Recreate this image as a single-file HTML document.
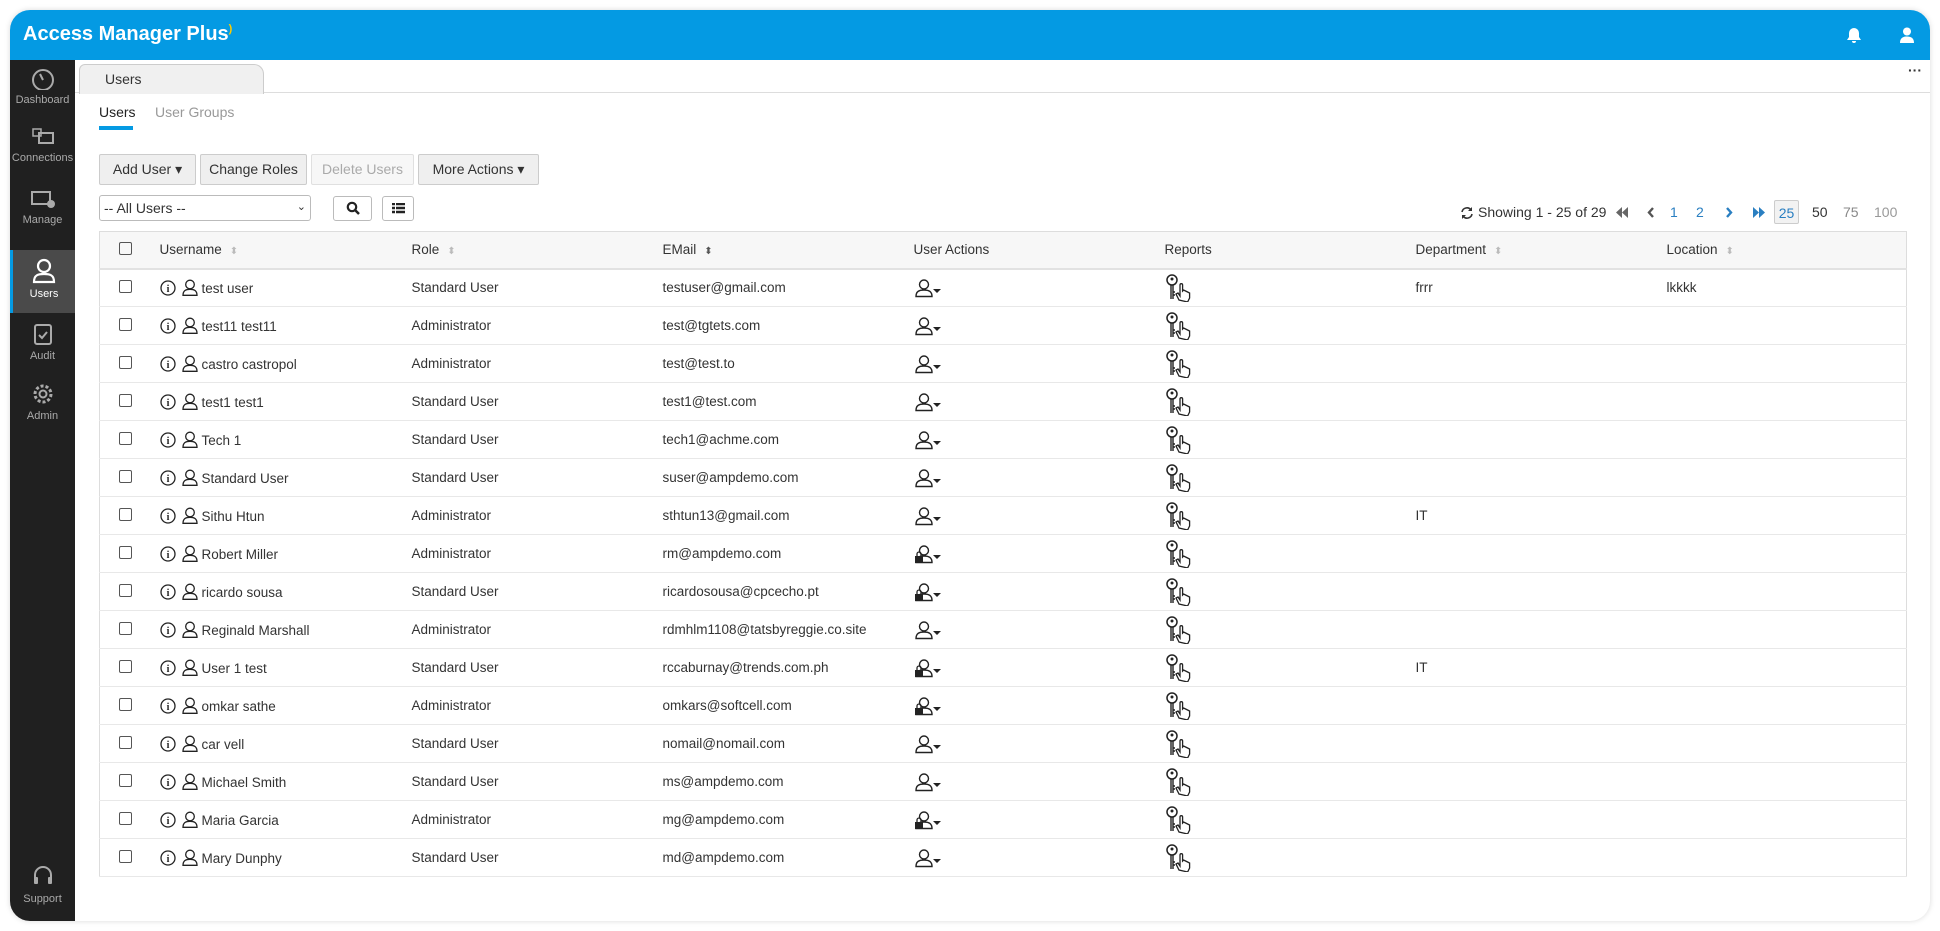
<!DOCTYPE html><html><head><meta charset="utf-8"><style>
*{box-sizing:border-box;margin:0;padding:0}
body{width:1940px;height:931px;background:#fff;font-family:"Liberation Sans",sans-serif;color:#333;position:relative;overflow:hidden}
.frame{position:absolute;left:10px;top:10px;width:1920px;height:911px;border-radius:20px;overflow:hidden;box-shadow:0 0 6px rgba(0,0,0,.15);background:#fff}
.top{position:absolute;left:0;top:0;width:100%;height:50px;background:#049ae3;color:#fff}
.logo{position:absolute;left:13px;top:13px;font-size:20px;font-weight:bold;letter-spacing:0}
.side{position:absolute;left:0;top:50px;width:65px;bottom:0;background:#202020}
.si{position:absolute;left:0;width:65px;text-align:center;color:#aaa;font-size:11px}
.si svg{display:block;margin:0 auto 4px}
.si.act{background:#4a4a4a;color:#fff;border-left:3px solid #049ae3}
.tabbar{position:absolute;left:65px;top:50px;right:0;height:33px;border-bottom:1px solid #ddd}
.tab{position:absolute;left:4px;top:4px;width:185px;height:30px;background:#f0f0f0;border:1px solid #ccc;border-bottom:none;border-radius:6px 10px 0 0;font-size:14px;padding:6px 0 0 25px;color:#333}
.abs{position:absolute}
.btn{position:absolute;top:144px;height:31px;background:#efefef;border:1px solid #ccc;border-radius:2px;font-size:14px;text-align:center;line-height:29px;color:#333}
table{position:absolute;left:89px;top:221px;width:1808px;border-collapse:collapse;border:1px solid #ddd;font-size:13.5px}
th{background:#f7f7f7;height:37px;font-weight:normal;text-align:left;border-bottom:2px solid #e2e2e2;color:#333}
td{height:38px;border-bottom:1px solid #e8e8e8;vertical-align:middle}
.cb{display:inline-block;width:13px;height:13px;border:1px solid #555;border-radius:2px;margin-left:-2px;vertical-align:-1px}
.srt{color:#bbb;font-size:10px;margin-left:8px}
.pg{position:absolute;top:194px;font-size:14px;line-height:16px}
</style></head><body><div class="frame">
<div class="top"><div class="logo">Access Manager Plus<span style="color:#fc0;font-size:11px;vertical-align:top">)</span></div>
<svg class="abs" style="left:1837px;top:17px" width="14" height="17" viewBox="0 0 14 17"><path d="M7 1a5 5 0 0 0-5 5v4l-2 3h14l-2-3V6a5 5 0 0 0-5-5zM5 14h4a2 2 0 0 1-4 0z" fill="#fff"/></svg>
<svg class="abs" style="left:1889px;top:17px" width="16" height="16" viewBox="0 0 16 16"><circle cx="8" cy="4.5" r="4" fill="#fff"/><path d="M1 16c0-5 3-6.5 7-6.5s7 1.5 7 6.5z" fill="#fff"/></svg>
</div>
<div class="side">
<div class="si" style="top:8px"><svg width="24" height="22" viewBox="0 0 24 22"><circle cx="12" cy="12" r="10" fill="none" stroke="#aaa" stroke-width="2"/><path d="M12 12l-3-6" stroke="#aaa" stroke-width="2"/></svg>Dashboard</div>
<div class="si" style="top:68px"><svg width="24" height="20" viewBox="0 0 24 20"><rect x="8" y="5" width="14" height="10" fill="none" stroke="#aaa" stroke-width="2"/><rect x="2" y="1" width="8" height="7" fill="none" stroke="#aaa" stroke-width="1.5"/></svg>Connections</div>
<div class="si" style="top:130px"><svg width="26" height="20" viewBox="0 0 26 20"><rect x="2" y="2" width="18" height="12" fill="none" stroke="#aaa" stroke-width="2"/><circle cx="21" cy="14" r="4" fill="#aaa"/></svg>Manage</div>
<div class="si act" style="top:190px;height:63px;padding-top:8px"><svg width="24" height="26" viewBox="0 0 24 26"><circle cx="12" cy="8" r="6" fill="none" stroke="#fff" stroke-width="2.2"/><path d="M2 24c0-7 4-8 10-8s10 1 10 8z" fill="none" stroke="#fff" stroke-width="2.2"/></svg>Users</div>
<div class="si" style="top:262px"><svg width="22" height="24" viewBox="0 0 22 24"><rect x="3" y="3" width="16" height="19" rx="2" fill="none" stroke="#aaa" stroke-width="2"/><path d="M7 13l3 3 5-6" fill="none" stroke="#aaa" stroke-width="2"/></svg>Audit</div>
<div class="si" style="top:322px"><svg width="24" height="24" viewBox="0 0 24 24"><circle cx="12" cy="12" r="8" fill="none" stroke="#aaa" stroke-width="3" stroke-dasharray="3 2"/><circle cx="12" cy="12" r="3.5" fill="none" stroke="#aaa" stroke-width="2"/></svg>Admin</div>
<div class="si" style="top:805px"><svg width="22" height="24" viewBox="0 0 22 24"><path d="M3 14V10a8 8 0 0 1 16 0v4" fill="none" stroke="#aaa" stroke-width="2"/><rect x="2" y="12" width="4" height="7" rx="1" fill="#aaa"/><rect x="16" y="12" width="4" height="7" rx="1" fill="#aaa"/></svg>Support</div>
</div>
<div class="tabbar"><div class="tab">Users</div><div class="abs" style="right:8px;top:2px;font-weight:bold;font-size:14px">···</div></div>
<div class="abs" style="left:89px;top:94px;font-size:14px;color:#222">Users</div>
<div class="abs" style="left:89px;top:116px;width:34px;height:4px;background:#049ae3"></div>
<div class="abs" style="left:145px;top:94px;font-size:14px;color:#999">User Groups</div>
<div class="btn" style="left:89px;width:97px">Add User ▾</div>
<div class="btn" style="left:190px;width:107px">Change Roles</div>
<div class="btn" style="left:301px;width:103px;color:#aaa;background:#f7f7f7;border-color:#e0e0e0">Delete Users</div>
<div class="btn" style="left:408px;width:121px">More Actions ▾</div>
<div class="abs" style="left:89px;top:185px;width:212px;height:26px;border:1px solid #bbb;border-radius:3px;font-size:14px;padding:4px 4px;background:#fff">-- All Users --<span style="float:right;font-size:11px">⌄</span></div>
<div class="abs" style="left:323px;top:186px;width:39px;height:25px;border:1px solid #bbb;border-radius:3px;text-align:center;padding-top:4px"><svg width="14" height="14" viewBox="0 0 14 14"><circle cx="6" cy="6" r="4.2" fill="none" stroke="#222" stroke-width="2.2"/><path d="M9 9l4 4" stroke="#222" stroke-width="2.5"/></svg></div>
<div class="abs" style="left:372px;top:186px;width:32px;height:25px;border:1px solid #bbb;border-radius:3px;text-align:center;padding-top:5px"><svg width="13" height="12" viewBox="0 0 13 12"><path d="M0 1h3M4 1h9M0 5h3M4 5h9M0 9h3M4 9h9" stroke="#222" stroke-width="2.5"/></svg></div>
<svg class="abs" style="left:1450px;top:196px" width="14" height="14" viewBox="0 0 14 14"><path d="M2 6a5 5 0 0 1 9-2M12 8a5 5 0 0 1-9 2" fill="none" stroke="#333" stroke-width="1.6"/><path d="M12 1v4H8zM2 13V9h4z" fill="#333"/></svg>
<div class="pg" style="left:1468px">Showing 1 - 25 of 29</div>
<svg class="abs" style="left:1606px;top:197px" width="12" height="11" viewBox="0 0 12 11"><path d="M6 0v11L0 5.5zM12 0v11L6 5.5z" fill="#666"/></svg>
<svg class="abs" style="left:1637px;top:197px" width="8" height="11" viewBox="0 0 8 11"><path d="M6 1L2 5.5 6 10" fill="none" stroke="#555" stroke-width="2.4"/></svg>
<div class="pg" style="left:1660px;color:#2a7fc1">1</div>
<div class="pg" style="left:1686px;color:#2a7fc1">2</div>
<svg class="abs" style="left:1715px;top:197px" width="8" height="11" viewBox="0 0 8 11"><path d="M2 1l4 4.5L2 10" fill="none" stroke="#2a7fc1" stroke-width="2.4"/></svg>
<svg class="abs" style="left:1743px;top:197px" width="12" height="11" viewBox="0 0 12 11"><path d="M0 0v11l6-5.5zM6 0v11l6-5.5z" fill="#2a7fc1"/></svg>
<div class="abs" style="left:1764px;top:190px;width:25px;height:24px;border:1px solid #ccc;background:#f2f2f2;border-radius:2px;font-size:14px;text-align:center;padding-top:4px;color:#2a7fc1">25</div>
<div class="pg" style="left:1802px">50</div>
<div class="pg" style="left:1833px;color:#888">75</div>
<div class="pg" style="left:1864px;color:#999">100</div>
<table id="t"><colgroup><col style="width:60px"><col style="width:252px"><col style="width:251px"><col style="width:251px"><col style="width:251px"><col style="width:251px"><col style="width:251px"><col></colgroup>
<tr><th style="padding-left:21px"><span class="cb"></span></th><th>Username<span class="srt">⬍</span></th><th>Role<span class="srt">⬍</span></th><th>EMail<span class="srt" style="color:#555">⬍</span></th><th>User Actions</th><th>Reports</th><th>Department<span class="srt">⬍</span></th><th>Location<span class="srt">⬍</span></th></tr>
</table>
</div>
<script>
var d=[["test user","Standard User","testuser@gmail.com",0,"frrr","lkkkk"],["test11 test11","Administrator","test@tgtets.com",0,"",""],["castro castropol","Administrator","test@test.to",0,"",""],["test1 test1","Standard User","test1@test.com",0,"",""],["Tech 1","Standard User","tech1@achme.com",0,"",""],["Standard User","Standard User","suser@ampdemo.com",0,"",""],["Sithu Htun","Administrator","sthtun13@gmail.com",0,"IT",""],["Robert Miller","Administrator","rm@ampdemo.com",1,"",""],["ricardo sousa","Standard User","ricardosousa@cpcecho.pt",1,"",""],["Reginald Marshall","Administrator","rdmhlm1108@tatsbyreggie.co.site",0,"",""],["User 1 test","Standard User","rccaburnay@trends.com.ph",1,"IT",""],["omkar sathe","Administrator","omkars@softcell.com",1,"",""],["car vell","Standard User","nomail@nomail.com",0,"",""],["Michael Smith","Standard User","ms@ampdemo.com",0,"",""],["Maria Garcia","Administrator","mg@ampdemo.com",1,"",""],["Mary Dunphy","Standard User","md@ampdemo.com",0,"",""]];
var info='<svg width="16" height="16" viewBox="0 0 16 16" style="vertical-align:-3px"><circle cx="8" cy="8" r="7" fill="none" stroke="#222" stroke-width="1.3"/><text x="8" y="12" font-size="10" text-anchor="middle" font-family="Liberation Serif" fill="#222" font-weight="bold">i</text></svg>';
var usr='<svg width="16" height="17" viewBox="0 0 16 17" style="vertical-align:-3px;margin:0 4px 0 6px"><circle cx="8" cy="5.5" r="4.3" fill="none" stroke="#222" stroke-width="1.3"/><path d="M1 16.3c0-5 3-6 7-6s7 1 7 6z" fill="none" stroke="#222" stroke-width="1.3"/></svg>';
function ua(l){return '<svg width="30" height="20" viewBox="0 0 30 20"><circle cx="10" cy="6.5" r="4.5" fill="none" stroke="#222" stroke-width="1.4"/><path d="M2 18.5c0-5 3-6.5 8-6.5s8 1.5 8 6.5z" fill="none" stroke="#222" stroke-width="1.4"/>'+(l?'<rect x="1" y="12" width="8" height="7" fill="#222"/><path d="M3 12V10a2 2 0 0 1 4 0v2" fill="none" stroke="#222" stroke-width="1.3"/>':'')+'<path d="M19 11h8l-4 4z" fill="#222"/></svg>'}
var rep='<svg width="28" height="28" viewBox="0 0 28 28"><circle cx="7" cy="6" r="5" fill="none" stroke="#222" stroke-width="1.5"/><circle cx="7" cy="5" r="1.5" fill="#222"/><path d="M6 11v14M8 11v14M8 18h2M8 21h2" stroke="#222" stroke-width="1.4"/><path d="M14 26l-3-6 2-1 2 3V11a1.3 1.3 0 0 1 2.6 0v6l1-1 2 1 2 1 2 1v5l-2 4z" fill="#fff" stroke="#222" stroke-width="1.3"/></svg>';
var h='';d.forEach(function(r){h+='<tr><td style="padding-left:21px"><span class="cb"></span></td><td>'+info+usr+r[0]+'</td><td>'+r[1]+'</td><td>'+r[2]+'</td><td style="padding-top:4px">'+ua(r[3])+'</td><td style="padding-top:4px">'+rep+'</td><td>'+r[4]+'</td><td>'+r[5]+'</td></tr>'});
document.getElementById('t').insertAdjacentHTML('beforeend',h);
</script>
</body></html>
